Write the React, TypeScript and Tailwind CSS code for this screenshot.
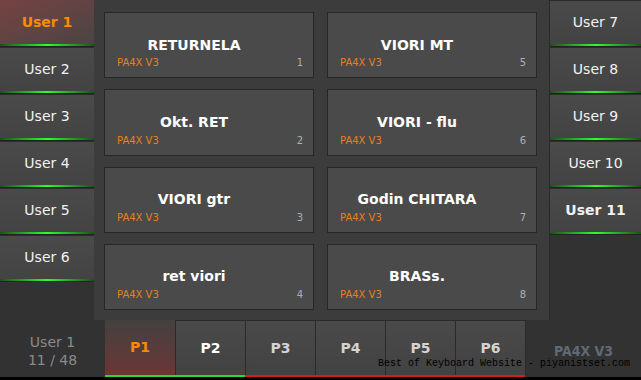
import React from "react"

const leftUsers = ["User 1", "User 2", "User 3", "User 4", "User 5", "User 6"]
const rightUsers = ["User 7", "User 8", "User 9", "User 10", "User 11"]

const cards = [
  { name: "RETURNELA", n: 1 },
  { name: "VIORI MT", n: 5 },
  { name: "Okt. RET", n: 2 },
  { name: "VIORI - flu", n: 6 },
  { name: "VIORI gtr", n: 3 },
  { name: "Godin CHITARA", n: 7 },
  { name: "ret viori", n: 4 },
  { name: "BRASs.", n: 8 },
]

const tabs = ["P1", "P2", "P3", "P4", "P5", "P6"]

function UserButton({ label, active, bold }: { label: string; active?: boolean; bold?: boolean }) {
  return (
    <div className="flex h-[47px] flex-col">
      <div
        className={
          active
            ? "flex flex-1 items-center justify-center bg-linear-to-br from-[#764242] to-[#4a4444] text-[14px] font-bold text-[#ff8a00]"
            : "flex flex-1 items-center justify-center border-t border-[#2c2c2c] bg-linear-to-b from-[#4a4a4a] to-[#434343] text-[14px] text-[#f2f2f2] " +
              (bold ? "font-bold" : "")
        }
      >
        {label}
      </div>
      <div className="h-[2px] bg-[linear-gradient(90deg,#1f4f1f,#2bff2b_50%,#1f4f1f)]" />
      <div className="h-[1px] bg-[#232323]" />
    </div>
  )
}

export default function App() {
  return (
    <div
      className="relative flex h-[380px] w-[641px] flex-col overflow-hidden bg-[#323232]"
      style={{ fontFamily: "'DejaVu Sans', Verdana, sans-serif" }}
    >
      <div className="flex h-[320px]">
        {/* left users */}
        <div className="flex w-[94px] flex-col">
          {leftUsers.map((u, i) => (
            <UserButton key={u} label={u} active={i === 0} />
          ))}
        </div>

        {/* slot panel */}
        <div className="grid w-[456px] grid-cols-2 grid-rows-4 gap-x-[13px] gap-y-[11px] border-r border-[#2a2a2a] bg-[#3c3c3c] pt-[12px] pr-[12px] pb-[10px] pl-[10px]">
          {cards.map((c) => (
            <div key={c.n} className="relative flex items-center justify-center border border-[#262626] bg-[#4a4a4a] pr-[30px]">
              <span className="text-[14px] font-bold text-white">{c.name}</span>
              <span className="absolute bottom-[7px] left-[12px] text-[10px] text-[#e8801a]">PA4X V3</span>
              <span className="absolute right-[10px] bottom-[7px] text-[10px] text-[#a8b0bb]">{c.n}</span>
            </div>
          ))}
        </div>

        {/* right users */}
        <div className="flex flex-1 flex-col">
          {rightUsers.map((u) => (
            <UserButton key={u} label={u} bold={u === "User 11"} />
          ))}
        </div>
      </div>

      {/* bottom bar */}
      <div className="flex h-[57px]">
        <div className="flex w-[105px] flex-col items-center justify-center pt-[5px] text-[14px] leading-[18px] text-[#8a8a8a]">
          <span>User 1</span>
          <span>11 / 48</span>
        </div>
        {tabs.map((t, i) => (
          <div key={t} className="flex w-[70px] flex-col">
            <div
              className={
                i === 0
                  ? "flex flex-1 items-center justify-center bg-linear-to-b from-[#434040] to-[#6a3636] text-[14px] font-bold text-[#ff8a00]"
                  : "flex flex-1 items-center justify-center border-t border-l border-[#2a2a2a] bg-linear-to-b from-[#4a4a4a] to-[#424242] text-[14px] font-bold " +
                    (i === 1 ? "text-white" : "text-[#d4d4d4]")
              }
            >
              {t}
            </div>
            <div className={i < 2 ? "h-[2px] bg-[#2fd82f]" : "h-[2px] bg-[#d81c1c]"} />
          </div>
        ))}
        <div
          className="flex flex-1 items-center justify-center border-l border-[#2a2a2a] pt-[4px] text-[14px] leading-[16px] font-bold text-[#5f6a75]"
          style={{ fontFamily: "'DejaVu Sans Condensed', 'DejaVu Sans', sans-serif" }}
        >
          PA4X V3
        </div>
      </div>
      <div className="h-[3px] bg-black" />

      <div
        className="absolute top-[358px] left-[378px] text-[10px] leading-[12px] text-black"
        style={{ fontFamily: "'Liberation Mono', monospace" }}
      >
        Best of Keyboard Website - piyanistset.com
      </div>
    </div>
  )
}
